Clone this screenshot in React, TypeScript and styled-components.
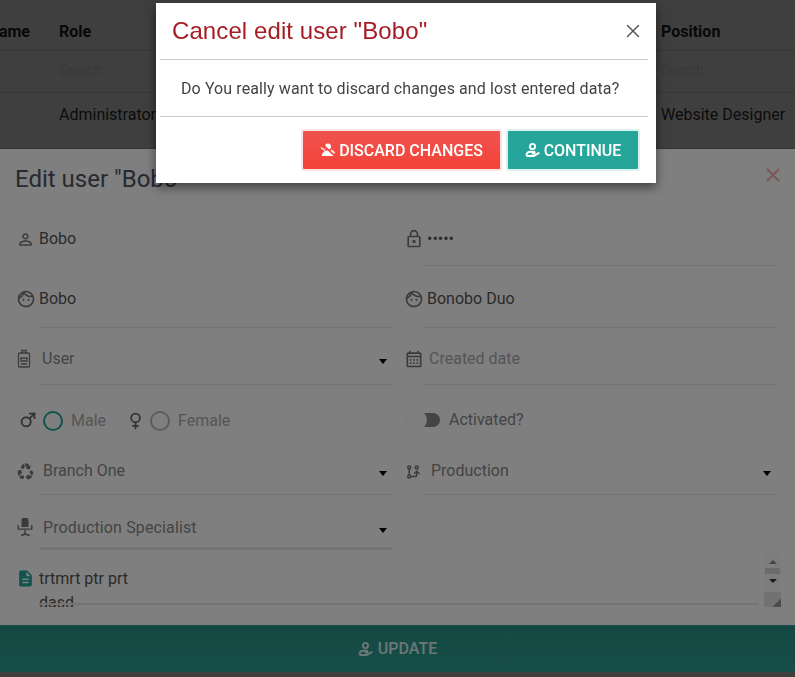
import React from 'react';
import styled, { createGlobalStyle } from 'styled-components';
import { X } from 'lucide-react';
import {
  MdDescription,
  MdLockOutline,
  MdOutlineCalendarMonth,
  MdOutlineFace,
  MdOutlinePersonOutline,
  MdRecycling,
} from 'react-icons/md';
import { TbGenderFemale, TbGenderMale, TbGitBranch } from 'react-icons/tb';

const GlobalStyle = createGlobalStyle`
  html, body {
    margin: 0;
    height: 100%;
    overflow: hidden;
    background: #fff;
    font-family: Roboto, "Liberation Sans", sans-serif;
  }
  * { box-sizing: border-box; }
`;

const BadgeIcon = () => (
  <svg width="16" height="20" viewBox="0 0 16 20" fill="none" stroke="currentColor" strokeWidth="1.3">
    <rect x="2.5" y="4" width="11" height="14" rx="1" />
    <path d="M6 4V1.5h4V4M5 9h6v3H5zM5 15h6" />
  </svg>
);

const ChairIcon = () => (
  <svg width="18" height="20" viewBox="0 0 18 20" fill="currentColor">
    <path d="M5.5 2.5a3.5 3.5 0 0 1 7 0V9h-7z" />
    <path d="M1.5 7h1.4v3.4h12.2V7h1.4v4.8H1.5z" />
    <path d="M8.3 11.8h1.4v3.4l4 1.6v1.7l-4-1.5-.7 0-4 1.5v-1.7l3.3-1.6z" />
  </svg>
);

const DiscardIcon = () => (
  <svg width="16" height="16" viewBox="0 0 16 16" fill="currentColor">
    <circle cx="8" cy="4.5" r="3" />
    <path d="M2 12.5c.6-2.8 3.2-4 6-4s5.4 1.2 6 4v1.5H2z" />
    <path d="M2 1.5l12 12" stroke="#f44336" strokeWidth="1.6" />
    <path d="M1 5.5l4 3M11 8l4 3" stroke="currentColor" strokeWidth="1.2" />
  </svg>
);

const ContinueIcon = ({ size = 16 }: { size?: number }) => (
  <svg width={size} height={size} viewBox="0 0 16 16" fill="none" stroke="currentColor" strokeWidth="1.9">
    <circle cx="7.5" cy="4.5" r="2.6" />
    <path d="M1.5 13.8c0-2.4 1.6-4 4-4h3.4c1 0 1 1.7 0 1.7H6.8M1.5 14h7.3l5.6-3.4" />
  </svg>
);

const columns = '59px 602px 1fr';

const Table = styled.div`
  height: 149px;
  background: #fff;
  font-size: 16px;
  color: #333;
  overflow: hidden;
`;

const TableRow = styled.div<{ $height: number; $top?: number; $bottom?: number }>`
  display: grid;
  grid-template-columns: ${columns};
  align-items: center;
  height: ${(p) => p.$height}px;
  padding-top: ${(p) => p.$top ?? 0}px;
  padding-bottom: ${(p) => p.$bottom ?? 0}px;
  border-bottom: 1px solid #ddd;
`;

const HeadCell = styled.div`
  font-size: 16px;
  font-weight: 700;
  color: #222;
  white-space: nowrap;
`;

const ClippedHead = styled(HeadCell)`
  display: flex;
  justify-content: flex-end;
  padding-right: 29px;
  overflow: hidden;
`;

const FilterCell = styled.div`
  font-size: 14px;
  color: #e2e2e2;
`;

const BodyCell = styled.div`
  white-space: nowrap;
  font-size: 16px;
`;

const Backdrop = styled.div`
  position: fixed;
  inset: 0;
  background: rgba(0, 0, 0, 0.5);
`;

const EditPanel = styled.section`
  position: fixed;
  left: 0;
  right: 0;
  top: 149px;
  height: 523px;
  display: flex;
  flex-direction: column;
  background: #fff;
`;

const PanelHeader = styled.header`
  display: flex;
  align-items: center;
  justify-content: space-between;
  height: 57px;
  padding: 0 11px 0 15px;
`;

const PanelTitle = styled.h2`
  margin: 2px 0 0;
  font-size: 24px;
  font-weight: 400;
  color: #4b5563;
`;

const PanelClose = styled.span`
  display: flex;
  margin-bottom: 5px;
  color: #f06a6a;
  opacity: 0.5;
`;

const FormGrid = styled.div`
  display: grid;
  grid-template-columns: 375px 371px;
  column-gap: 13px;
  padding-left: 17px;
`;

const Field = styled.div<{ $height: number; $below: number; $lineLeft?: number; $thick?: boolean }>`
  display: flex;
  align-items: flex-end;
  height: ${(p) => p.$height}px;
  padding-bottom: ${(p) => p.$below}px;
  position: relative;
  ${(p) =>
    p.$lineLeft !== undefined &&
    `&::after {
      content: '';
      position: absolute;
      left: ${p.$lineLeft}px;
      right: 0;
      bottom: 0;
      height: ${p.$thick ? 3 : 1}px;
      background: #e6e6e6;
    }`}
`;

const IconSlot = styled.span<{ $active?: boolean; $top?: number }>`
  display: flex;
  flex: none;
  align-self: ${(p) => (p.$top ? 'flex-start' : 'auto')};
  width: 22px;
  margin-top: ${(p) => p.$top ?? 0}px;
  margin-left: -1px;
  padding-right: 1px;
  color: ${(p) => (p.$active ? '#26a69a' : '#777')};
`;

const Value = styled.span<{ $muted?: boolean; $inset?: number; $spaced?: boolean }>`
  flex: 1;
  font-size: 16px;
  line-height: 20px;
  letter-spacing: ${(p) => (p.$spaced ? '0.13px' : '0')};
  margin-left: ${(p) => (p.$inset ?? 0) + 1}px;
  color: ${(p) => (p.$muted ? '#888' : '#555')};
`;

const Placeholder = styled(Value)`
  color: #aaa;
`;

const Caret = styled.i`
  width: 0;
  height: 0;
  margin: 0 5px 5px 0;
  border: 4px solid transparent;
  border-top: 5px solid #000;
  border-bottom: 0;
`;

const Radio = styled.span<{ $checked?: boolean }>`
  flex: none;
  width: 20px;
  height: 20px;
  margin: 0 8px 0 4px;
  border-radius: 50%;
  border: 2px solid ${(p) => (p.$checked ? '#26a69a' : '#bbb')};
`;

const RadioLabel = styled.span<{ $gap: number }>`
  font-size: 16px;
  line-height: 20px;
  color: #aaa;
  margin-right: ${(p) => p.$gap}px;
`;

const Toggle = styled.span`
  position: relative;
  flex: none;
  width: 17px;
  height: 14px;
  margin: 0 8px 3px 18px;
  border-radius: 0 7px 7px 0;
  background: #888;
`;

const ToggleKnob = styled.span`
  position: absolute;
  left: -18px;
  top: -4px;
  width: 22px;
  height: 22px;
  border-radius: 50%;
  background: #fff;
  border: 1px solid #f2f2f2;
`;

const NotesRow = styled.div`
  display: flex;
  height: 57px;
  padding: 2px 14px 0 17px;
`;

const NotesText = styled.div`
  position: relative;
  flex: 1;
  height: 55px;
  padding-top: 15px;
  font-size: 16px;
  line-height: 24px;
  color: #555;
  overflow: hidden;
  &::after {
    content: '';
    position: absolute;
    left: 1px;
    right: 22px;
    bottom: 2px;
    height: 2px;
    background: #e6e6e6;
  }
`;

const NotesLine = styled.div`
  margin-left: 1px;
`;

const Scrollbar = styled.div`
  position: absolute;
  right: 0;
  top: 0;
  bottom: 0;
  width: 17px;
  display: flex;
  flex-direction: column;
  align-items: center;
  background: #fafafa;
`;

const ScrollArrow = styled.i<{ $down?: boolean }>`
  width: 0;
  height: 0;
  margin-top: ${(p) => (p.$down ? 5 : 8)}px;
  border: 4px solid transparent;
  ${(p) =>
    p.$down
      ? 'border-top: 4px solid #333; border-bottom: 0;'
      : 'border-bottom: 4px solid #888; border-top: 0;'}
`;

const ScrollThumb = styled.i`
  width: 15px;
  height: 6px;
  margin-top: 4px;
  background: #d6d6d6;
`;

const Resizer = styled.i`
  width: 17px;
  margin-top: auto;
  height: 15px;
  background: linear-gradient(135deg, #e4e4e4 72%, #999 72%);
`;

const Spacer = styled.div`
  flex: 1;
`;

const UpdateBar = styled.button`
  display: flex;
  align-items: center;
  justify-content: center;
  gap: 4px;
  height: 47px;
  border: 0;
  font: 500 16px Roboto, "Liberation Sans", sans-serif;
  color: #d7eeeb;
  background: linear-gradient(#2f9e92 0, #2f9e92 1px, #23897e 2px, #2b9388 6px, #2c9c91 100%);
`;

const Dialog = styled.div`
  position: fixed;
  left: 156px;
  top: 3px;
  width: 500px;
  height: 180px;
  background: #fff;
  box-shadow: 0 4px 10px rgba(0, 0, 0, 0.5);
`;

const DialogHeader = styled.header`
  display: flex;
  align-items: center;
  justify-content: space-between;
  height: 57px;
  margin: 0 8px 0 4px;
  padding: 0 4px 0 12px;
  border-bottom: 1px solid #c9c9c9;
`;

const DialogTitle = styled.h1`
  margin: 0;
  font: 400 24px "Liberation Sans", Arial, sans-serif;
  letter-spacing: 0.09px;
  color: #a51d24;
`;

const DialogClose = styled.span`
  display: flex;
  color: #555;
`;

const DialogBody = styled.p`
  height: 57px;
  margin: 0 8px 0 4px;
  padding: 0 0 0 21px;
  display: flex;
  align-items: center;
  border-bottom: 1px solid #c9c9c9;
  font-size: 16px;
  letter-spacing: 0.1px;
  color: #444;
`;

const DialogFooter = styled.footer`
  display: flex;
  justify-content: flex-end;
  gap: 8px;
  padding: 14px 18px 0 0;
`;

const DialogButton = styled.button<{ $tone: 'red' | 'teal'; $width: number }>`
  display: flex;
  align-items: center;
  justify-content: center;
  gap: 3px;
  width: ${(p) => p.$width}px;
  height: 38px;
  padding: 0;
  border: 0;
  border-radius: 1px;
  font: 500 16px Roboto, "Liberation Sans", sans-serif;
  color: #fff;
  background: ${(p) => (p.$tone === 'red' ? 'linear-gradient(#ef5350, #f44336)' : '#26a69a')};
  box-shadow: 0 0 0 2px ${(p) => (p.$tone === 'red' ? '#fde4e2' : '#dbf1ee')};
`;

export default function App() {
  return (
    <>
      <GlobalStyle />
      <Table>
        <TableRow $height={51} $top={12}>
          <ClippedHead>
            <span>ame</span>
          </ClippedHead>
          <HeadCell>Role</HeadCell>
          <HeadCell>Position</HeadCell>
        </TableRow>
        <TableRow $height={42} $bottom={3}>
          <span />
          <FilterCell>Search</FilterCell>
          <FilterCell>Search</FilterCell>
        </TableRow>
        <TableRow $height={56} $bottom={13}>
          <span />
          <BodyCell>Administrator</BodyCell>
          <BodyCell>Website Designer</BodyCell>
        </TableRow>
      </Table>
      <Backdrop />
      <EditPanel>
        <PanelHeader>
          <PanelTitle>Edit user "Bobo"</PanelTitle>
          <PanelClose>
            <X size={22} strokeWidth={2.5} />
          </PanelClose>
        </PanelHeader>
        <FormGrid>
          <Field $height={60} $below={17}>
            <IconSlot>
              <MdOutlinePersonOutline size={19} />
            </IconSlot>
            <Value>Bobo</Value>
          </Field>
          <Field $height={60} $below={17} $lineLeft={18}>
            <IconSlot>
              <MdLockOutline size={20} />
            </IconSlot>
            <Value>•••••</Value>
          </Field>
          <Field $height={62} $below={19} $lineLeft={23}>
            <IconSlot>
              <MdOutlineFace size={20} />
            </IconSlot>
            <Value>Bobo</Value>
          </Field>
          <Field $height={62} $below={19} $lineLeft={18}>
            <IconSlot>
              <MdOutlineFace size={20} />
            </IconSlot>
            <Value>Bonobo Duo</Value>
          </Field>
          <Field $height={57} $below={16} $lineLeft={23}>
            <IconSlot>
              <BadgeIcon />
            </IconSlot>
            <Value $muted $inset={3}>
              User
            </Value>
            <Caret />
          </Field>
          <Field $height={57} $below={16} $lineLeft={18}>
            <IconSlot>
              <MdOutlineCalendarMonth size={20} />
            </IconSlot>
            <Placeholder $inset={2}>Created date</Placeholder>
          </Field>
          <Field $height={55} $below={9}>
            <TbGenderMale size={22} color="#666" />
            <Radio $checked />
            <RadioLabel $gap={19}>Male</RadioLabel>
            <TbGenderFemale size={21} color="#666" />
            <Radio />
            <RadioLabel $gap={0}>Female</RadioLabel>
          </Field>
          <Field $height={55} $below={10}>
            <Toggle>
              <ToggleKnob />
            </Toggle>
            <Value $muted>Activated?</Value>
          </Field>
          <Field $height={55} $below={14} $lineLeft={23}>
            <IconSlot>
              <MdRecycling size={19} />
            </IconSlot>
            <Value $muted $inset={4}>
              Branch One
            </Value>
            <Caret />
          </Field>
          <Field $height={55} $below={14} $lineLeft={18}>
            <IconSlot>
              <TbGitBranch size={18} />
            </IconSlot>
            <Value $muted $inset={4}>
              Production
            </Value>
            <Caret />
          </Field>
          <Field $height={55} $below={12} $lineLeft={23} $thick>
            <IconSlot>
              <ChairIcon />
            </IconSlot>
            <Value $muted $inset={4} $spaced>
              Production Specialist
            </Value>
            <Caret />
          </Field>
        </FormGrid>
        <NotesRow>
          <IconSlot $active $top={17}>
            <MdDescription size={19} />
          </IconSlot>
          <NotesText>
            <NotesLine>trtmrt ptr prt</NotesLine>
            <NotesLine>dasd</NotesLine>
            <Scrollbar>
              <ScrollArrow />
              <ScrollThumb />
              <ScrollArrow $down />
              <Resizer />
            </Scrollbar>
          </NotesText>
        </NotesRow>
        <Spacer />
        <UpdateBar>
          <ContinueIcon />
          UPDATE
        </UpdateBar>
      </EditPanel>
      <Backdrop />
      <Dialog>
        <DialogHeader>
          <DialogTitle>Cancel edit user "Bobo"</DialogTitle>
          <DialogClose>
            <X size={22} strokeWidth={1.5} />
          </DialogClose>
        </DialogHeader>
        <DialogBody>Do You really want to discard changes and lost entered data?</DialogBody>
        <DialogFooter>
          <DialogButton $tone="red" $width={197}>
            <DiscardIcon />
            DISCARD CHANGES
          </DialogButton>
          <DialogButton $tone="teal" $width={130}>
            <ContinueIcon />
            CONTINUE
          </DialogButton>
        </DialogFooter>
      </Dialog>
    </>
  );
}
